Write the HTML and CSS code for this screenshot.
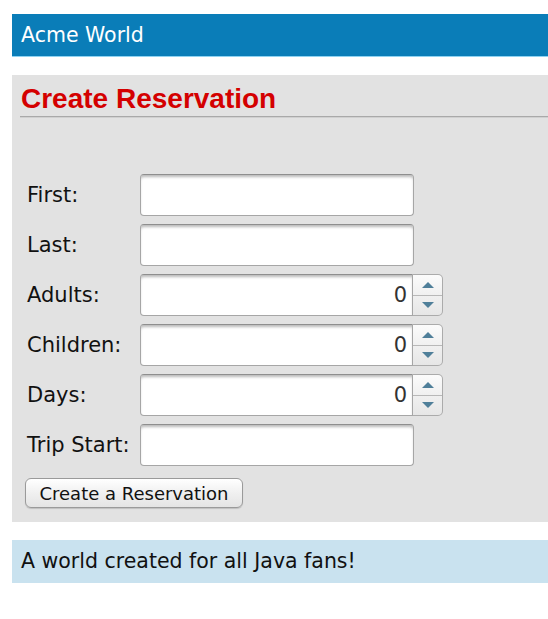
FILE: index.html
```html
<!DOCTYPE html>
<html>
<head>
<meta charset="utf-8">
<title>Acme World</title>
<link rel="stylesheet" href="styles.css">
</head>
<body>
<div class="page">
  <header class="topbar">Acme World</header>
  <section class="panel">
    <h2 class="panel-title">Create Reservation</h2>
    <form class="form">
      <label class="lbl">First:</label>
      <div class="field"><input class="txt" type="text"></div>
      <label class="lbl">Last:</label>
      <div class="field"><input class="txt" type="text"></div>
      <label class="lbl">Adults:</label>
      <div class="field spin">
        <input class="txt num" type="text" value="0">
        <span class="spinner"><span class="up"></span><span class="down"></span></span>
      </div>
      <label class="lbl">Children:</label>
      <div class="field spin">
        <input class="txt num" type="text" value="0">
        <span class="spinner"><span class="up"></span><span class="down"></span></span>
      </div>
      <label class="lbl">Days:</label>
      <div class="field spin">
        <input class="txt num" type="text" value="0">
        <span class="spinner"><span class="up"></span><span class="down"></span></span>
      </div>
      <label class="lbl">Trip Start:</label>
      <div class="field"><input class="txt" type="text"></div>
    </form>
    <button class="btn" type="button">Create a Reservation</button>
  </section>
  <footer class="foot">A world created for all Java fans!</footer>
</div>
</body>
</html>
```
FILE: styles.css
```css
html, body {
  margin: 0;
  padding: 0;
  background: #ffffff;
}
body {
  font-family: "DejaVu Sans", Verdana, sans-serif;
  color: #111;
}
.page {
  padding: 14px 0 0 12px;
}
.topbar {
  background: #0a7db8;
  color: #ffffff;
  font-size: 20.5px;
  height: 42px;
  line-height: 42px;
  padding-left: 9px;
  border-bottom: 1px solid #8fd3f2;
  box-sizing: content-box;
}
.panel {
  margin-top: 18px;
  background: #e2e2e2;
  padding: 8px 0 14px 15px;
}
.panel-title {
  margin: 0 0 0 -7px;
  padding-left: 1px;
  font-family: "Liberation Sans", Arial, sans-serif;
  font-weight: bold;
  font-size: 28px;
  line-height: 32px;
  color: #d40000;
  border-bottom: 1px solid #a9a9a9;
  box-shadow: 0 1px 0 #d0d0d0;
  padding-bottom: 1px;
}
.form {
  margin-top: 57px;
  display: grid;
  grid-template-columns: 113px auto;
  row-gap: 8px;
  align-items: center;
}
.lbl {
  font-size: 21px;
  color: #111;
}
.field {
  display: flex;
  height: 42px;
}
.txt {
  width: 274px;
  height: 42px;
  box-sizing: border-box;
  border: 1px solid #a6a6a6;
  border-top-color: #8e8e8e;
  border-radius: 4px;
  background: #ffffff;
  box-shadow: inset 0 3px 3px -1px rgba(0, 0, 0, 0.28);
  font-family: "DejaVu Sans", Verdana, sans-serif;
  font-size: 21px;
  color: #333;
  padding: 0 6px;
  margin: 0;
  outline: none;
}
.num {
  width: 273px;
  text-align: right;
  border-radius: 4px 0 0 4px;
  padding-right: 5px;
}
.spinner {
  width: 30px;
  height: 42px;
  box-sizing: border-box;
  display: flex;
  flex-direction: column;
  border: 1px solid #ababab;
  border-left: none;
  border-radius: 0 5px 5px 0;
  overflow: hidden;
  background: linear-gradient(#fbfbfb, #e6e6e6);
}
.spinner .up,
.spinner .down {
  flex: 1;
  position: relative;
}
.spinner .up {
  border-bottom: 1px solid #b8b8b8;
}
.spinner .up::after,
.spinner .down::after {
  content: "";
  position: absolute;
  left: 50%;
  top: 50%;
  margin-left: -6px;
  border-left: 6px solid transparent;
  border-right: 6px solid transparent;
}
.spinner .up::after {
  margin-top: -3px;
  border-bottom: 6px solid #4f7f99;
}
.spinner .down::after {
  margin-top: -3px;
  border-top: 6px solid #4f7f99;
}
.btn {
  display: block;
  margin: 12px 0 0 -2px;
  height: 30px;
  width: 218px;
  padding: 0;
  font-family: "DejaVu Sans", Verdana, sans-serif;
  font-size: 18px;
  color: #111;
  border: 1px solid #9a9a9a;
  border-radius: 6px;
  background: linear-gradient(#ffffff, #f0f0f0 50%, #e4e4e4);
  box-shadow: 0 1px 1px rgba(0, 0, 0, 0.15);
}
.foot {
  margin-top: 18px;
  background: #c9e2ef;
  height: 43px;
  line-height: 43px;
  padding-left: 9px;
  font-size: 20.5px;
  color: #111;
}
```
